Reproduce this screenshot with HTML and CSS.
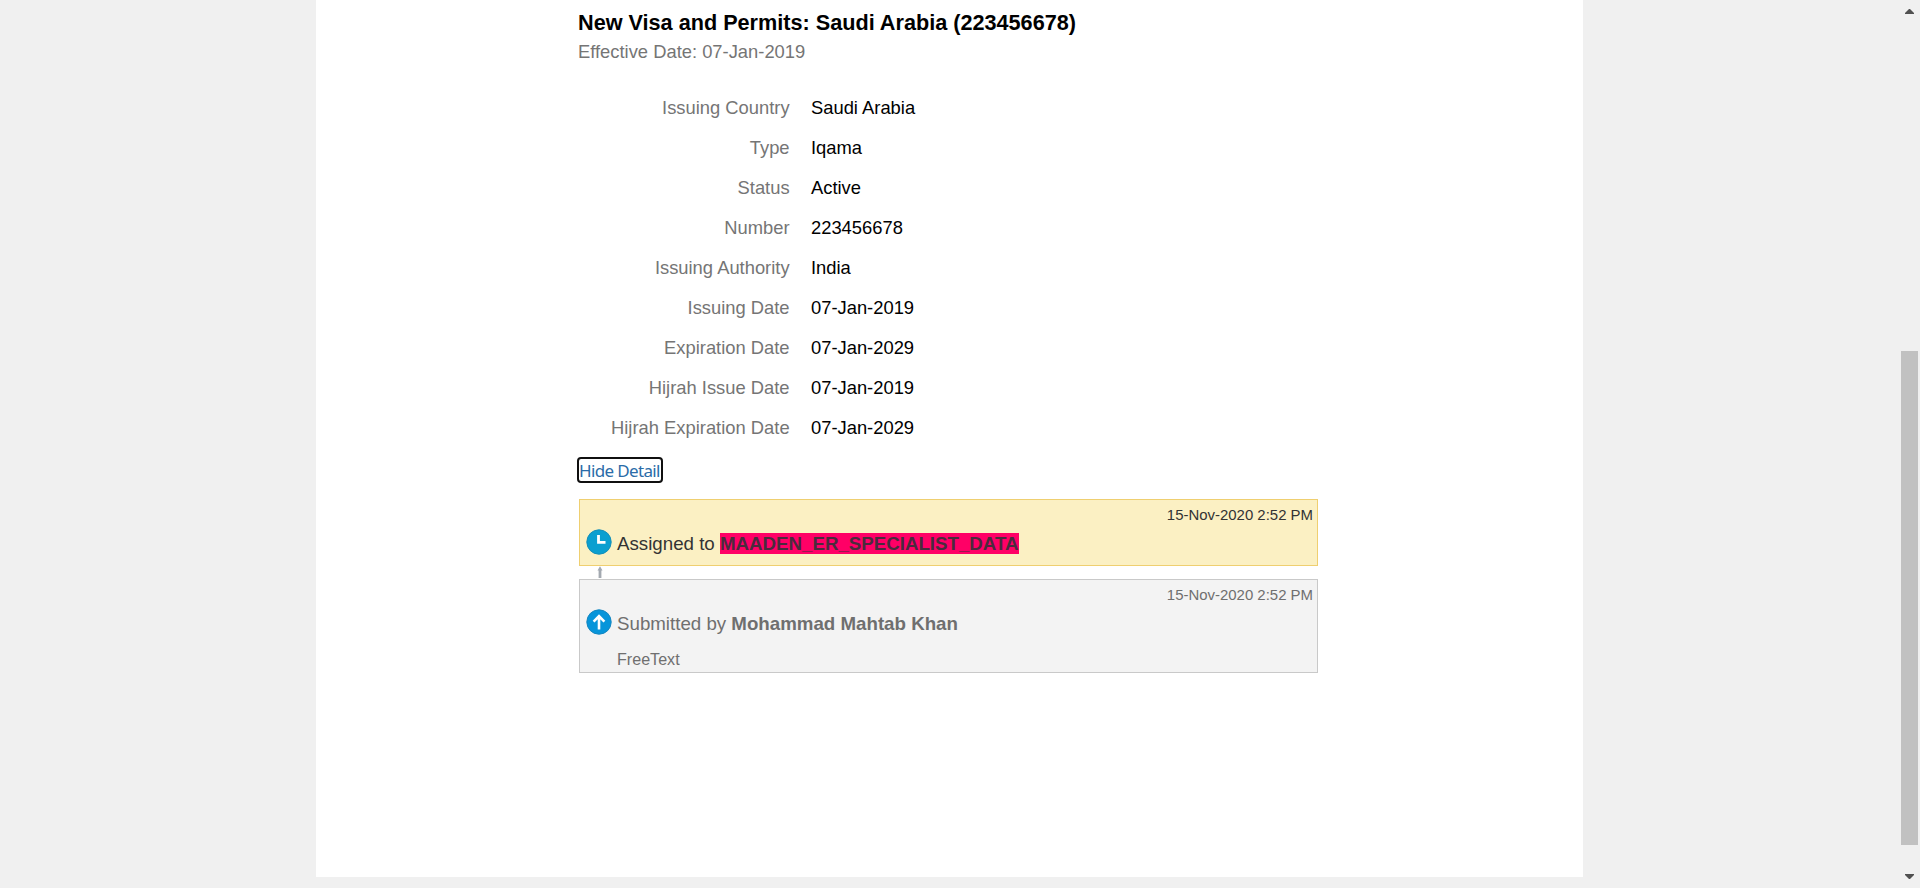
FILE: index.html
```html
<!DOCTYPE html>
<html lang="en">
<head>
<meta charset="utf-8">
<title>New Visa and Permits</title>
<link rel="stylesheet" href="styles.css">
</head>
<body>
<main class="sheet">
  <section class="content">
    <h1 class="title">New Visa and Permits: Saudi Arabia (223456678)</h1>
    <p class="effective">Effective Date: 07-Jan-2019</p>
    <dl class="fields">
      <dt>Issuing Country</dt><dd>Saudi Arabia</dd>
      <dt>Type</dt><dd>Iqama</dd>
      <dt>Status</dt><dd>Active</dd>
      <dt>Number</dt><dd>223456678</dd>
      <dt>Issuing Authority</dt><dd>India</dd>
      <dt>Issuing Date</dt><dd>07-Jan-2019</dd>
      <dt>Expiration Date</dt><dd>07-Jan-2029</dd>
      <dt>Hijrah Issue Date</dt><dd>07-Jan-2019</dd>
      <dt>Hijrah Expiration Date</dt><dd>07-Jan-2029</dd>
    </dl>
    <a class="toggle">Hide Detail</a>
    <article class="card pending">
      <time class="stamp">15-Nov-2020 2:52 PM</time>
      <div class="line">
        <svg class="icon" viewBox="0 0 26 26"><circle cx="13" cy="13" r="12.2" fill="#0a9fd0" stroke="#168fb8"/><path d="M12.500 6v7.300h7" fill="none" stroke="#fff" stroke-width="2.800"/></svg>
        <span class="text">Assigned to <b class="mark">MAADEN_ER_SPECIALIST_DATA</b></span>
      </div>
    </article>
    <svg class="connector" viewBox="0 0 6 13"><path d="M0.500 4.500 3 0.300 5.500 4.500zM1.600 4h2.800v8H1.600z" fill="#a3a9b0"/></svg>
    <article class="card submitted">
      <time class="stamp">15-Nov-2020 2:52 PM</time>
      <div class="line">
        <svg class="icon" viewBox="0 0 26 26"><circle cx="13" cy="13" r="12.2" fill="#0795da" stroke="#1687c0"/><path d="M13 20.500V7.500M7.600 12.600 13 7.200l5.400 5.400" fill="none" stroke="#fff" stroke-width="2.600"/></svg>
        <span class="text">Submitted by <b>Mohammad Mahtab Khan</b></span>
      </div>
      <p class="comment">FreeText</p>
    </article>
  </section>
</main>
<aside class="scrollbar">
  <svg class="arrow" viewBox="0 0 9 5"><path d="M0 5V4L4 0h1l4 4v1z" fill="#505050"/></svg>
  <div class="thumb"></div>
  <svg class="arrow" viewBox="0 0 9 5"><path d="M0 0v1l4 4h1l4-4V0z" fill="#505050"/></svg>
</aside>
</body>
</html>
```
FILE: styles.css
```css
* { box-sizing: border-box; }
body {
  margin: 0;
  height: 888px;
  overflow: hidden;
  display: flex;
  background: #f0f0f0;
  font: 18.36px "Liberation Sans", Arial, sans-serif;
  color: #000;
}
.sheet {
  width: 1267px;
  height: 877px;
  margin-left: 316px;
  padding: 9px 265px 0 262px;
  background: #fff;
}
.content { display: flex; flex-direction: column; align-items: flex-start; }
.title { margin: 0; font-size: 21.65px; line-height: 27px; white-space: nowrap; }
.effective { margin: 4px 0 0; line-height: 24px; color: #757575; }
.fields {
  margin: 24px 0 0;
  display: grid;
  grid-template-columns: 211.6px auto;
  column-gap: 21.4px;
  line-height: 40px;
}
.fields dt { text-align: right; color: #757575; }
.fields dd { margin: 0; }
.toggle {
  margin: 11px 0 0 1px;
  width: 82px;
  height: 22px;
  outline: 2px solid #101010;
  border-radius: 2px;
  font: 17px/24px "Noto Sans", sans-serif;
  letter-spacing: -0.65px;
  white-space: nowrap;
  color: #2b6ca8;
}
.card {
  width: 739px;
  margin-left: 1px;
  border: 1px solid;
  display: flex;
  flex-direction: column;
}
.pending { height: 67px; margin-top: 18px; background: #fbf0c3; border-color: #efcf70; color: #333; }
.submitted { height: 94px; background: #f3f3f3; border-color: #c9c9c9; color: #6f6f6f; }
.stamp { align-self: flex-end; margin-top: 5px; padding-right: 4px; font-size: 14.95px; line-height: 20px; }
.line { display: flex; align-items: center; gap: 5px; height: 26px; margin: 4px 0 0 6px; font-size: 18.72px; }
.text { padding-top: 3px; }
.icon { width: 26px; height: 26px; }
.mark { background: #ff0066; color: #4a2b3d; }
.comment { margin: 14px 0 0 37px; font-size: 16.1px; line-height: 20px; }
.connector { width: 6px; height: 13px; margin-left: 19px; }
.scrollbar {
  width: 17px;
  margin-left: 318px;
  padding: 9px 0;
  display: flex;
  flex-direction: column;
  align-items: center;
}
.arrow { width: 9px; height: 5px; }
.thumb { width: 17px; height: 494px; margin: 337px 0 29px; background: #c1c1c1; }
```
